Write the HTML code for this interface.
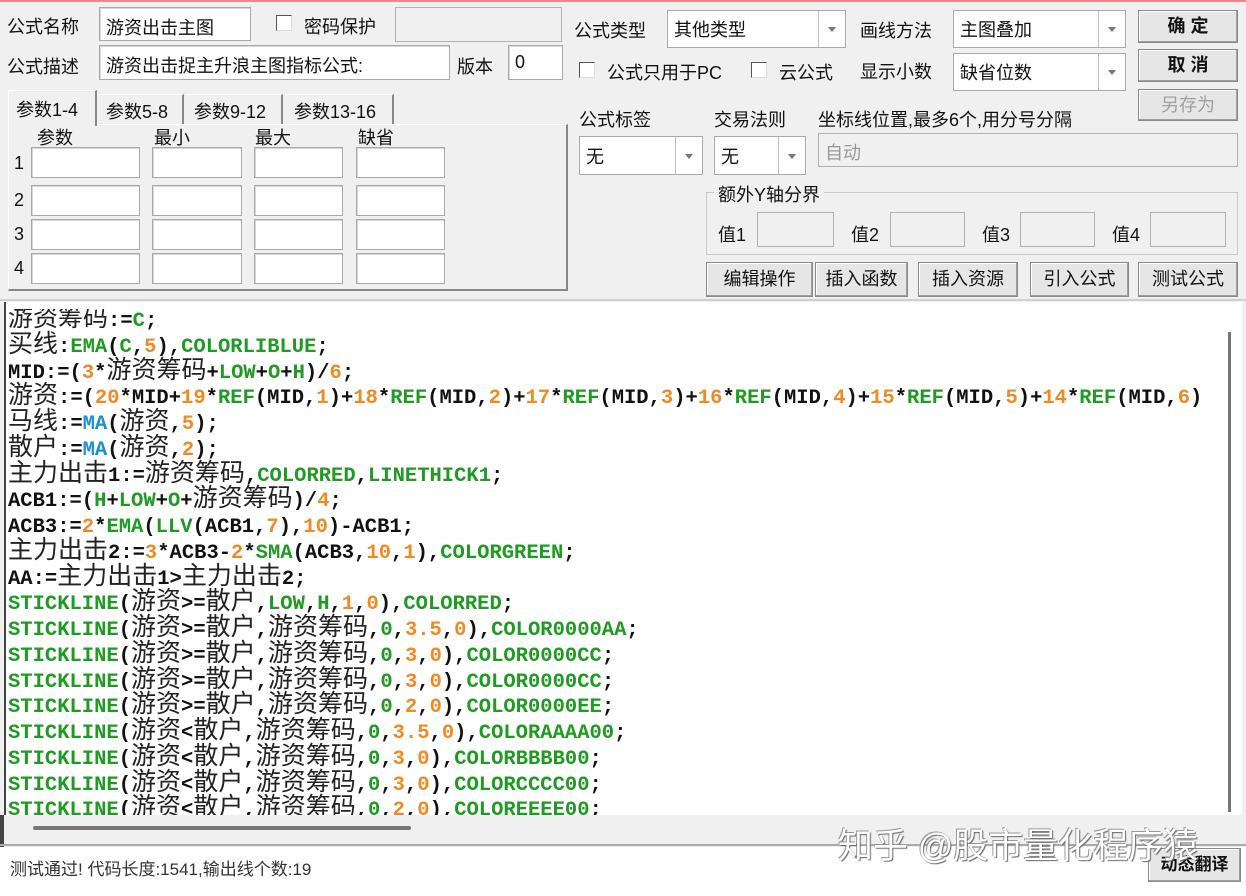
<!DOCTYPE html>
<html><head><meta charset="utf-8">
<style>
*{box-sizing:border-box;margin:0;padding:0}
body{width:1246px;height:896px;background:#f0f0f0;position:relative;overflow:hidden;font-family:"Liberation Sans","Noto Sans CJK SC",sans-serif;font-size:18px;color:#111}
.a{position:absolute;white-space:nowrap}
.in{position:absolute;background:#fff;border:1px solid #a8a8a8;box-shadow:inset 1px 1px 0 #d8d8d8}
.gin{position:absolute;background:#f0f0f0;border:1px solid #b0b0b0}
.btn{position:absolute;background:#e6e6e6;border:1px solid #8a8a8a;box-shadow:inset -1px -1px 0 #a0a0a0,inset 1px 1px 0 #fff;text-align:center;font-size:18px}
.cb{position:absolute;width:16px;height:16px;background:#fff;border:1px solid #555;border-right-color:#ddd;border-bottom-color:#ddd}
.sel{position:absolute;background:#fff;border:1px solid #a8a8a8}
.sel .arr{position:absolute;right:0;top:0;bottom:0;width:27px;border-left:1px solid #c0c0c0}
.sel .arr:after{content:"";position:absolute;left:9px;top:50%;margin-top:-2px;border:4px solid transparent;border-top:5px solid #777}
.sel span{position:absolute;left:6px;top:50%;transform:translateY(-50%)}
#code{position:absolute;left:4px;top:302px;width:1238px;height:513px;background:#fff;border-left:2px solid #444;overflow:hidden}
#lines{position:absolute;left:2px;top:7px;width:1210px;overflow:hidden;font-family:"Liberation Mono",monospace;font-weight:bold;font-size:20.5px;color:#111}
#lines div{white-space:nowrap;height:25.75px;line-height:25.75px}
.c{font-family:"Noto Sans CJK SC","WenQuanYi Zen Hei",sans-serif;font-weight:normal;font-size:25px;line-height:0;color:#222}
.g{color:#1f9a22}.o{color:#f08a24}.b{color:#1d8fd6}
</style></head><body>
<div style="position:absolute;left:0;top:0;width:1246px;height:2px;background:#e88"></div>

<div class="a" style="left:7px;top:13px">公式名称</div>
<div class="in" style="left:99px;top:7px;width:152px;height:34px"><span class="a" style="left:6px;top:6px">游资出击主图</span></div>
<div class="cb" style="left:276px;top:15px"></div>
<div class="a" style="left:304px;top:13px">密码保护</div>
<div class="gin" style="left:395px;top:7px;width:167px;height:35px"></div>

<div class="a" style="left:7px;top:53px">公式描述</div>
<div class="in" style="left:99px;top:45px;width:351px;height:35px"><span class="a" style="left:6px;top:6px">游资出击捉主升浪主图指标公式:</span></div>
<div class="a" style="left:457px;top:53px">版本</div>
<div class="in" style="left:508px;top:45px;width:55px;height:35px"><span class="a" style="left:6px;top:6px">0</span></div>

<div style="position:absolute;left:8px;top:124px;width:560px;height:167px;border:1px solid #fff;border-right:2px solid #888;border-bottom:2px solid #888"></div>
<div style="position:absolute;left:8px;top:90px;width:89px;height:36px;background:#f0f0f0;border:1px solid #fff;border-right:2px solid #888;border-bottom:none"></div>
<div class="a" style="left:16px;top:96px">参数1-4</div>
<div style="position:absolute;left:98px;top:94px;width:86px;height:30px;border-right:2px solid #888;border-top:1px solid #fff"></div>
<div class="a" style="left:106px;top:98px">参数5-8</div>
<div style="position:absolute;left:186px;top:94px;width:97px;height:30px;border-right:2px solid #888;border-top:1px solid #fff"></div>
<div class="a" style="left:194px;top:98px">参数9-12</div>
<div style="position:absolute;left:285px;top:94px;width:109px;height:30px;border-right:2px solid #888;border-top:1px solid #fff"></div>
<div class="a" style="left:294px;top:98px">参数13-16</div>

<div class="a" style="left:37px;top:124px">参数</div>
<div class="a" style="left:154px;top:124px">最小</div>
<div class="a" style="left:255px;top:124px">最大</div>
<div class="a" style="left:358px;top:124px">缺省</div>

<div class="a" style="left:14px;top:153px">1</div><div class="a" style="left:14px;top:190px">2</div><div class="a" style="left:14px;top:224px">3</div><div class="a" style="left:14px;top:258px">4</div>
<div class="in" style="left:31px;top:147px;width:109px;height:31px"></div><div class="in" style="left:152px;top:147px;width:90px;height:31px"></div><div class="in" style="left:254px;top:147px;width:89px;height:31px"></div><div class="in" style="left:356px;top:147px;width:89px;height:31px"></div>
<div class="in" style="left:31px;top:185px;width:109px;height:31px"></div><div class="in" style="left:152px;top:185px;width:90px;height:31px"></div><div class="in" style="left:254px;top:185px;width:89px;height:31px"></div><div class="in" style="left:356px;top:185px;width:89px;height:31px"></div>
<div class="in" style="left:31px;top:219px;width:109px;height:31px"></div><div class="in" style="left:152px;top:219px;width:90px;height:31px"></div><div class="in" style="left:254px;top:219px;width:89px;height:31px"></div><div class="in" style="left:356px;top:219px;width:89px;height:31px"></div>
<div class="in" style="left:31px;top:253px;width:109px;height:31px"></div><div class="in" style="left:152px;top:253px;width:90px;height:31px"></div><div class="in" style="left:254px;top:253px;width:89px;height:31px"></div><div class="in" style="left:356px;top:253px;width:89px;height:31px"></div>

<div class="a" style="left:574px;top:17px">公式类型</div>
<div class="sel" style="left:667px;top:10px;width:179px;height:38px"><span>其他类型</span><div class="arr"></div></div>
<div class="a" style="left:860px;top:17px">画线方法</div>
<div class="sel" style="left:953px;top:10px;width:173px;height:38px"><span>主图叠加</span><div class="arr"></div></div>
<div class="btn" style="left:1138px;top:10px;width:100px;height:33px;line-height:31px;font-weight:bold">确 定</div>
<div class="btn" style="left:1138px;top:49px;width:100px;height:33px;line-height:31px;font-weight:bold">取 消</div>
<div class="btn" style="left:1138px;top:89px;width:100px;height:32px;line-height:30px;color:#a0a0a0">另存为</div>

<div class="cb" style="left:579px;top:62px"></div>
<div class="a" style="left:607px;top:59px">公式只用于PC</div>
<div class="cb" style="left:751px;top:62px"></div>
<div class="a" style="left:779px;top:59px">云公式</div>
<div class="a" style="left:860px;top:58px">显示小数</div>
<div class="sel" style="left:953px;top:53px;width:173px;height:38px"><span>缺省位数</span><div class="arr"></div></div>

<div class="a" style="left:579px;top:106px">公式标签</div>
<div class="a" style="left:714px;top:106px">交易法则</div>
<div class="a" style="left:818px;top:106px">坐标线位置,最多6个,用分号分隔</div>
<div class="sel" style="left:579px;top:136px;width:124px;height:39px"><span>无</span><div class="arr"></div></div>
<div class="sel" style="left:714px;top:136px;width:92px;height:39px"><span>无</span><div class="arr"></div></div>
<div class="gin" style="left:818px;top:133px;width:420px;height:34px"><span class="a" style="left:6px;top:5px;color:#999">自动</span></div>

<div style="position:absolute;left:706px;top:192px;width:532px;height:63px;border:1px solid #c8c8c8"></div>
<div class="a" style="left:714px;top:181px;background:#f0f0f0;padding:0 4px">额外Y轴分界</div>
<div class="a" style="left:718px;top:221px">值1</div><div class="gin" style="left:757px;top:212px;width:77px;height:35px"></div>
<div class="a" style="left:851px;top:221px">值2</div><div class="gin" style="left:890px;top:212px;width:75px;height:35px"></div>
<div class="a" style="left:982px;top:221px">值3</div><div class="gin" style="left:1020px;top:212px;width:75px;height:35px"></div>
<div class="a" style="left:1112px;top:221px">值4</div><div class="gin" style="left:1150px;top:212px;width:76px;height:35px"></div>

<div class="btn" style="left:706px;top:262px;width:107px;height:35px;line-height:33px">编辑操作</div>
<div class="btn" style="left:815px;top:262px;width:93px;height:35px;line-height:33px">插入函数</div>
<div class="btn" style="left:918px;top:262px;width:100px;height:35px;line-height:33px">插入资源</div>
<div class="btn" style="left:1030px;top:262px;width:99px;height:35px;line-height:33px">引入公式</div>
<div class="btn" style="left:1138px;top:262px;width:100px;height:35px;line-height:33px">测试公式</div>

<div style="position:absolute;left:0;top:299px;width:1246px;height:2px;background:#d0d0d0"></div>
<div id="code">
<div id="lines">
<div><span class="c">游资筹码</span>:=<span class="g">C</span>;</div>
<div><span class="c">买线</span>:<span class="g">EMA</span>(<span class="g">C</span>,<span class="o">5</span>),<span class="g">COLORLIBLUE</span>;</div>
<div>MID:=(<span class="o">3</span>*<span class="c">游资筹码</span>+<span class="g">LOW</span>+<span class="g">O</span>+<span class="g">H</span>)/<span class="o">6</span>;</div>
<div><span class="c">游资</span>:=(<span class="o">20</span>*MID+<span class="o">19</span>*<span class="g">REF</span>(MID,<span class="o">1</span>)+<span class="o">18</span>*<span class="g">REF</span>(MID,<span class="o">2</span>)+<span class="o">17</span>*<span class="g">REF</span>(MID,<span class="o">3</span>)+<span class="o">16</span>*<span class="g">REF</span>(MID,<span class="o">4</span>)+<span class="o">15</span>*<span class="g">REF</span>(MID,<span class="o">5</span>)+<span class="o">14</span>*<span class="g">REF</span>(MID,<span class="o">6</span>)</div>
<div><span class="c">马线</span>:=<span class="b">MA</span>(<span class="c">游资</span>,<span class="o">5</span>);</div>
<div><span class="c">散户</span>:=<span class="b">MA</span>(<span class="c">游资</span>,<span class="o">2</span>);</div>
<div><span class="c">主力出击</span>1:=<span class="c">游资筹码</span>,<span class="g">COLORRED</span>,<span class="g">LINETHICK1</span>;</div>
<div>ACB1:=(<span class="g">H</span>+<span class="g">LOW</span>+<span class="g">O</span>+<span class="c">游资筹码</span>)/<span class="o">4</span>;</div>
<div>ACB3:=<span class="o">2</span>*<span class="g">EMA</span>(<span class="g">LLV</span>(ACB1,<span class="o">7</span>),<span class="o">10</span>)-ACB1;</div>
<div><span class="c">主力出击</span>2:=<span class="o">3</span>*ACB3-<span class="o">2</span>*<span class="g">SMA</span>(ACB3,<span class="o">10</span>,<span class="o">1</span>),<span class="g">COLORGREEN</span>;</div>
<div>AA:=<span class="c">主力出击</span>1&gt;<span class="c">主力出击</span>2;</div>
<div><span class="g">STICKLINE</span>(<span class="c">游资</span>&gt;=<span class="c">散户</span>,<span class="g">LOW</span>,<span class="g">H</span>,<span class="o">1</span>,<span class="o">0</span>),<span class="g">COLORRED</span>;</div>
<div><span class="g">STICKLINE</span>(<span class="c">游资</span>&gt;=<span class="c">散户</span>,<span class="c">游资筹码</span>,<span class="g">0</span>,<span class="o">3.5</span>,<span class="o">0</span>),<span class="g">COLOR0000AA</span>;</div>
<div><span class="g">STICKLINE</span>(<span class="c">游资</span>&gt;=<span class="c">散户</span>,<span class="c">游资筹码</span>,<span class="g">0</span>,<span class="o">3</span>,<span class="o">0</span>),<span class="g">COLOR0000CC</span>;</div>
<div><span class="g">STICKLINE</span>(<span class="c">游资</span>&gt;=<span class="c">散户</span>,<span class="c">游资筹码</span>,<span class="g">0</span>,<span class="o">3</span>,<span class="o">0</span>),<span class="g">COLOR0000CC</span>;</div>
<div><span class="g">STICKLINE</span>(<span class="c">游资</span>&gt;=<span class="c">散户</span>,<span class="c">游资筹码</span>,<span class="g">0</span>,<span class="o">2</span>,<span class="o">0</span>),<span class="g">COLOR0000EE</span>;</div>
<div><span class="g">STICKLINE</span>(<span class="c">游资</span>&lt;<span class="c">散户</span>,<span class="c">游资筹码</span>,<span class="g">0</span>,<span class="o">3.5</span>,<span class="o">0</span>),<span class="g">COLORAAAA00</span>;</div>
<div><span class="g">STICKLINE</span>(<span class="c">游资</span>&lt;<span class="c">散户</span>,<span class="c">游资筹码</span>,<span class="g">0</span>,<span class="o">3</span>,<span class="o">0</span>),<span class="g">COLORBBBB00</span>;</div>
<div><span class="g">STICKLINE</span>(<span class="c">游资</span>&lt;<span class="c">散户</span>,<span class="c">游资筹码</span>,<span class="g">0</span>,<span class="o">3</span>,<span class="o">0</span>),<span class="g">COLORCCCC00</span>;</div>
<div><span class="g">STICKLINE</span>(<span class="c">游资</span>&lt;<span class="c">散户</span>,<span class="c">游资筹码</span>,<span class="g">0</span>,<span class="o">2</span>,<span class="o">0</span>),<span class="g">COLOREEEE00</span>;</div>
</div>
<div style="position:absolute;left:1222px;top:30px;width:3px;height:480px;background:#777"></div>
</div>
<div style="position:absolute;left:0;top:815px;width:4px;height:32px;background:#444"></div>
<div style="position:absolute;left:33px;top:826px;width:378px;height:4px;background:#777;border-radius:2px"></div>
<div style="position:absolute;left:0;top:844px;width:1246px;height:2px;background:#aaa"></div>
<div style="position:absolute;left:0;top:847px;width:1246px;height:49px;background:#fff"></div>
<div class="a" style="left:10px;top:855px;font-size:17px;color:#333">测试通过! 代码长度:1541,输出线个数:19</div>
<div class="btn" style="left:1148px;top:848px;width:93px;height:34px;line-height:32px;font-size:17px;font-weight:bold">动态翻译</div>
<div class="a" style="left:838px;top:818px;font-size:35px;color:#fff;text-shadow:1px 1px 1px #666,-1px -1px 0 #999">知乎 @股市量化程序猿</div>
</body></html>
